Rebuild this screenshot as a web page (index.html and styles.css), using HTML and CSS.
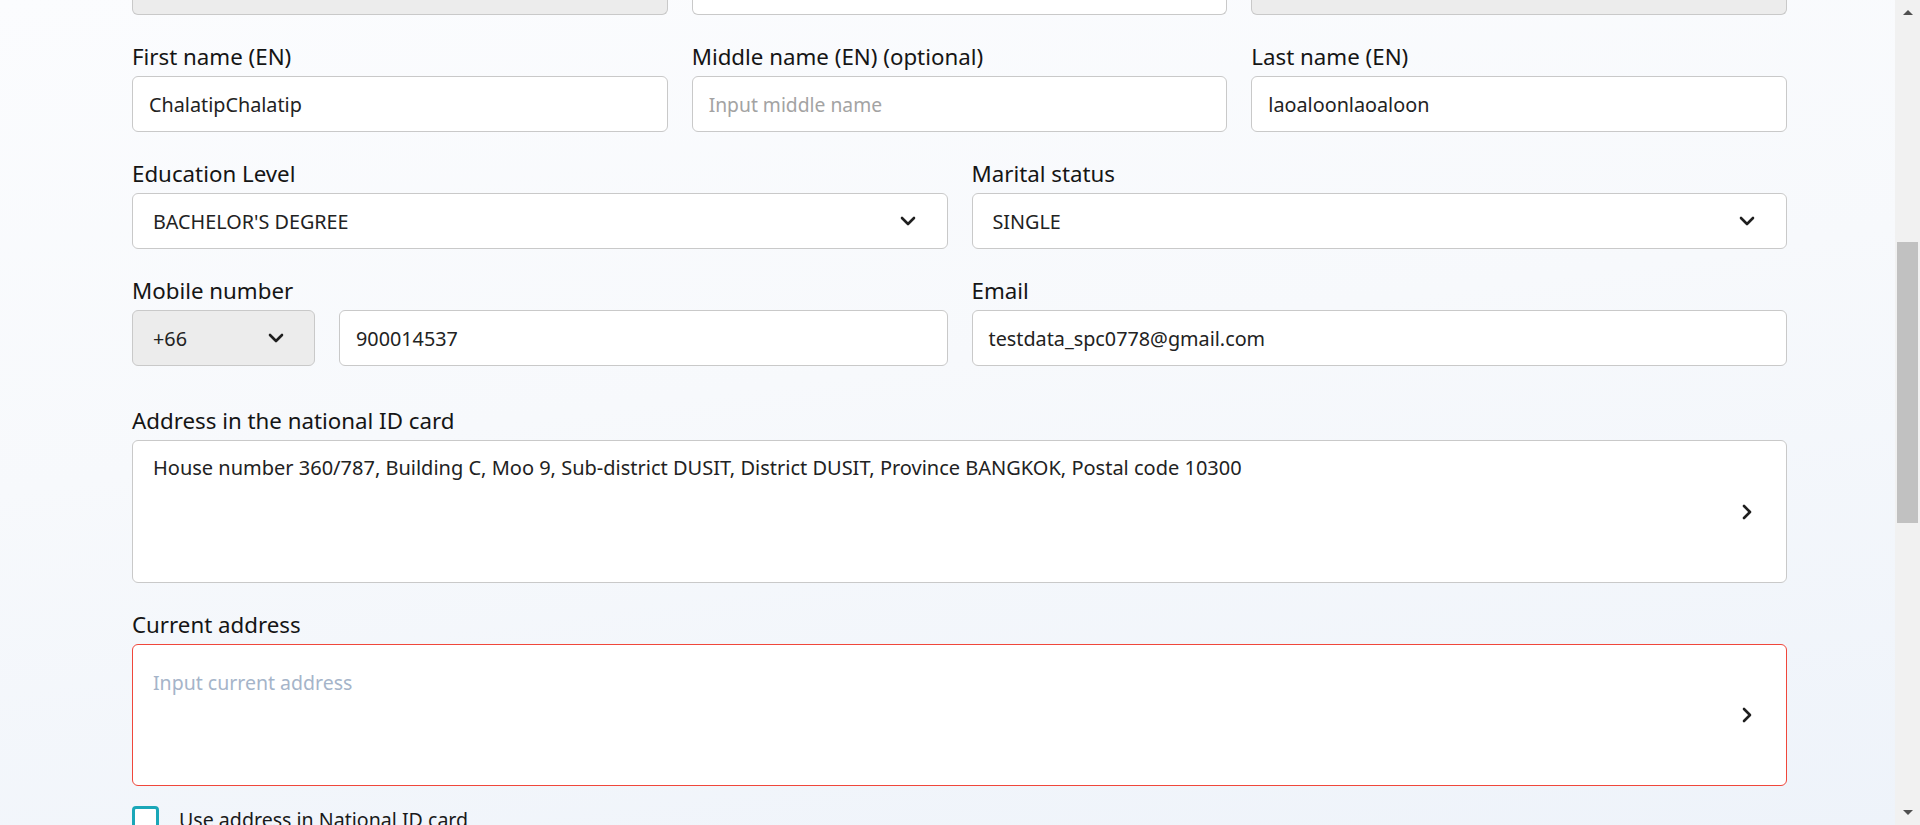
FILE: index.html
```html
<!DOCTYPE html>
<html lang="en">
<head>
<meta charset="utf-8">
<title>Personal information</title>
<link rel="stylesheet" href="styles.css">
</head>
<body>
<div class="page">
  <main class="content">
    <form class="form">
      <div class="grid3 partial">
        <div class="stub stub-gray"></div>
        <div class="stub"></div>
        <div class="stub stub-gray"></div>
      </div>

      <div class="grid3 row">
        <div class="field">
          <div class="label">First name (EN)</div>
          <div class="input">ChalatipChalatip</div>
        </div>
        <div class="field">
          <div class="label">Middle name (EN) (optional)</div>
          <div class="input placeholder">Input middle name</div>
        </div>
        <div class="field">
          <div class="label">Last name (EN)</div>
          <div class="input">laoaloonlaoaloon</div>
        </div>
      </div>

      <div class="grid2 row">
        <div class="field">
          <div class="label">Education Level</div>
          <div class="input select">
            <span>BACHELOR'S DEGREE</span>
            <svg class="chev" viewBox="0 0 18 18" width="18" height="18"><path d="M3 6 9 12l6-6" fill="none" stroke="#1f1f1f" stroke-width="2.6" stroke-linecap="round" stroke-linejoin="round"/></svg>
          </div>
        </div>
        <div class="field">
          <div class="label">Marital status</div>
          <div class="input select">
            <span>SINGLE</span>
            <svg class="chev" viewBox="0 0 18 18" width="18" height="18"><path d="M3 6 9 12l6-6" fill="none" stroke="#1f1f1f" stroke-width="2.6" stroke-linecap="round" stroke-linejoin="round"/></svg>
          </div>
        </div>
      </div>

      <div class="grid2 row">
        <div class="field">
          <div class="label">Mobile number</div>
          <div class="phone">
            <div class="input select code">
              <span>+66</span>
              <svg class="chev" viewBox="0 0 18 18" width="18" height="18"><path d="M3 6 9 12l6-6" fill="none" stroke="#1f1f1f" stroke-width="2.6" stroke-linecap="round" stroke-linejoin="round"/></svg>
            </div>
            <div class="input grow">900014537</div>
          </div>
        </div>
        <div class="field">
          <div class="label">Email</div>
          <div class="input">testdata_spc0778@gmail.com</div>
        </div>
      </div>

      <div class="field row-address">
        <div class="label">Address in the national ID card</div>
        <div class="area">
          <span class="area-text">House number 360/787, Building C, Moo 9, Sub-district DUSIT, District DUSIT, Province BANGKOK, Postal code 10300</span>
          <svg class="chev-r" viewBox="0 0 18 18" width="18" height="18"><path d="M6 3l6 6-6 6" fill="none" stroke="#1f1f1f" stroke-width="2.6" stroke-linecap="round" stroke-linejoin="round"/></svg>
        </div>
      </div>

      <div class="field row">
        <div class="label">Current address</div>
        <div class="area area-error">
          <span class="area-text placeholder-blue">Input current address</span>
          <svg class="chev-r" viewBox="0 0 18 18" width="18" height="18"><path d="M6 3l6 6-6 6" fill="none" stroke="#1f1f1f" stroke-width="2.6" stroke-linecap="round" stroke-linejoin="round"/></svg>
        </div>
      </div>

      <label class="check">
        <span class="box"></span>
        <span class="check-text">Use address in National ID card</span>
      </label>
    </form>
  </main>
  <aside class="scrollbar">
    <div class="sb-btn"><span class="tri-up"></span></div>
    <div class="sb-track"><div class="sb-thumb"></div></div>
    <div class="sb-btn"><span class="tri-down"></span></div>
  </aside>
</div>
</body>
</html>
```
FILE: styles.css
```css
* { box-sizing: border-box; }

html, body {
  margin: 0;
  padding: 0;
  height: 100%;
  overflow: hidden;
}

body {
  font-family: "Noto Sans", "Open Sans", sans-serif;
  color: #1c1c1c;
}

.page {
  display: flex;
  height: 825px;
  background: linear-gradient(172deg, #fbfcfe 0%, #f7f9fc 45%, #eef3fa 100%);
}

.content {
  flex: 1;
  padding: 0 108px 0 132px;
  overflow: hidden;
}

.form {
  display: flex;
  flex-direction: column;
}

.grid3 {
  display: grid;
  grid-template-columns: repeat(3, 1fr);
  column-gap: 24px;
}

.grid2 {
  display: grid;
  grid-template-columns: repeat(2, 1fr);
  column-gap: 24px;
}

.partial {
  height: 15px;
}

.stub {
  height: 15px;
  background: #fff;
  border: 1px solid #c9c9c9;
  border-top: none;
  border-radius: 0 0 6px 6px;
}

.stub-gray {
  background: #ececec;
}

.row {
  margin-top: 29px;
}

.row-address {
  margin-top: 42px;
}

.label {
  font-size: 22.3px;
  line-height: 26px;
  margin-bottom: 6px;
  color: #151515;
  white-space: nowrap;
}

.input {
  height: 56px;
  background: #fff;
  border: 1px solid #c9c9c9;
  border-radius: 6px;
  padding: 0 16px;
  display: flex;
  align-items: center;
  font-size: 19.8px;
  color: #222;
  white-space: nowrap;
}

.placeholder {
  color: #a3a3a3;
  font-size: 19.3px;
}

.select {
  padding: 0 30px 0 20px;
  justify-content: space-between;
}

.phone {
  display: flex;
  gap: 24px;
}

.code {
  width: 183px;
  flex: none;
  background: #ececec;
  padding-right: 29px;
}

.grow {
  flex: 1;
}

.chev, .chev-r {
  flex: none;
  display: block;
}

.area {
  height: 143px;
  background: #fff;
  border: 1px solid #c9c9c9;
  border-radius: 6px;
  padding: 15px 30px 15px 20px;
  display: flex;
  justify-content: space-between;
  align-items: flex-start;
  font-size: 20px;
  line-height: 24px;
  color: #222;
}

.area .chev-r {
  align-self: center;
}

.area-error {
  height: 142px;
  border-color: #f0473b;
  padding-top: 26px;
  padding-bottom: 26px;
}

.placeholder-blue {
  color: #a5b4c9;
  font-size: 19.5px;
}

.check {
  margin-top: 20px;
  display: flex;
  align-items: center;
  gap: 20px;
}

.box {
  width: 27px;
  height: 27px;
  border: 3px solid #1aa7b8;
  border-radius: 4px;
  background: #fff;
  flex: none;
}

.check-text {
  font-size: 19.6px;
  line-height: 26px;
  color: #1a1a1a;
}

.scrollbar {
  width: 25px;
  flex: none;
  background: #f1f1f1;
  display: flex;
  flex-direction: column;
  align-items: center;
}

.sb-btn {
  height: 25px;
  width: 100%;
  display: flex;
  align-items: center;
  justify-content: center;
}

.tri-up {
  width: 0;
  height: 0;
  border-left: 5px solid transparent;
  border-right: 5px solid transparent;
  border-bottom: 5px solid #505050;
}

.tri-down {
  width: 0;
  height: 0;
  border-left: 5px solid transparent;
  border-right: 5px solid transparent;
  border-top: 5px solid #505050;
}

.sb-track {
  flex: 1;
  width: 100%;
  padding: 217px 2px 0;
}

.sb-thumb {
  height: 281px;
  background: #c1c1c1;
}
```
